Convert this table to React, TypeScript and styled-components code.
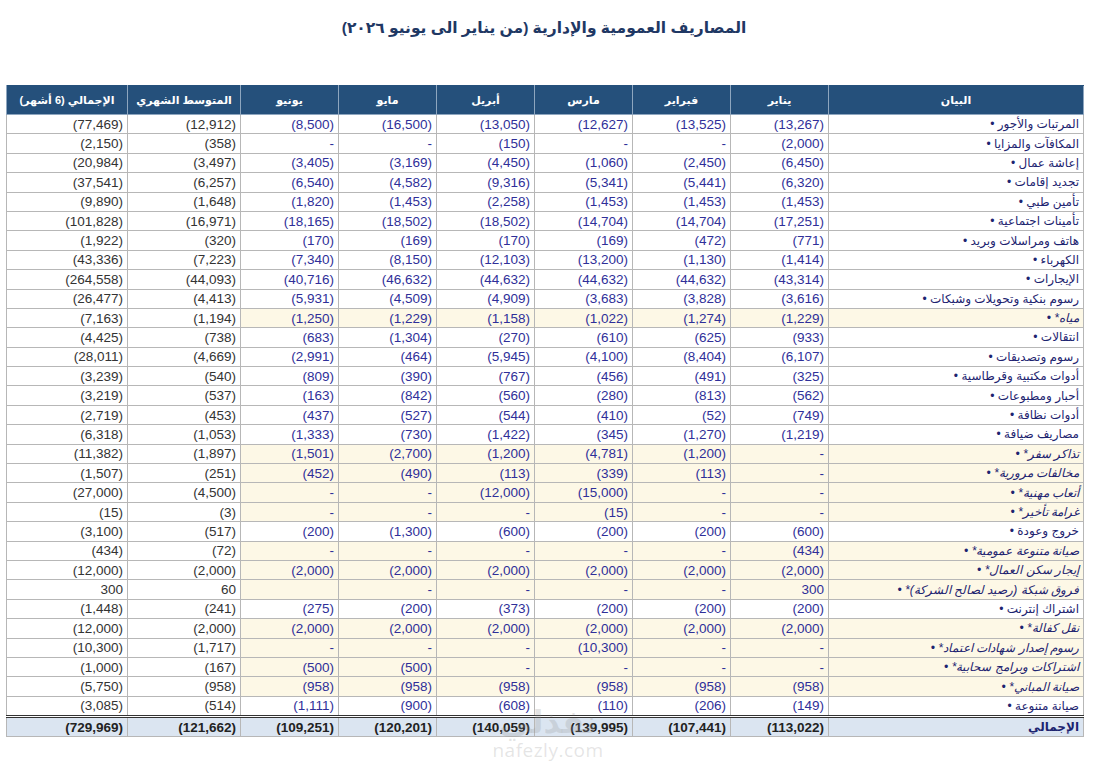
import styled, { createGlobalStyle } from "styled-components";

type Row = {
  label: string;
  months: (number | null)[];
  avg: number;
  total: number;
  manual?: boolean;
};

const months = ["يناير", "فبراير", "مارس", "أبريل", "مايو", "يونيو"];

const rows: Row[] = [
  { label: "المرتبات والأجور", months: [-13267, -13525, -12627, -13050, -16500, -8500], avg: -12912, total: -77469 },
  { label: "المكافآت والمزايا", months: [-2000, 0, 0, -150, 0, 0], avg: -358, total: -2150 },
  { label: "إعاشة عمال", months: [-6450, -2450, -1060, -4450, -3169, -3405], avg: -3497, total: -20984 },
  { label: "تجديد إقامات", months: [-6320, -5441, -5341, -9316, -4582, -6540], avg: -6257, total: -37541 },
  { label: "تأمين طبي", months: [-1453, -1453, -1453, -2258, -1453, -1820], avg: -1648, total: -9890 },
  { label: "تأمينات اجتماعية", months: [-17251, -14704, -14704, -18502, -18502, -18165], avg: -16971, total: -101828 },
  { label: "هاتف ومراسلات وبريد", months: [-771, -472, -169, -170, -169, -170], avg: -320, total: -1922 },
  { label: "الكهرباء", months: [-1414, -1130, -13200, -12103, -8150, -7340], avg: -7223, total: -43336 },
  { label: "الإيجارات", months: [-43314, -44632, -44632, -44632, -46632, -40716], avg: -44093, total: -264558 },
  { label: "رسوم بنكية وتحويلات وشبكات", months: [-3616, -3828, -3683, -4909, -4509, -5931], avg: -4413, total: -26477 },
  { label: "مياه*", manual: true, months: [-1229, -1274, -1022, -1158, -1229, -1250], avg: -1194, total: -7163 },
  { label: "انتقالات", months: [-933, -625, -610, -270, -1304, -683], avg: -738, total: -4425 },
  { label: "رسوم وتصديقات", months: [-6107, -8404, -4100, -5945, -464, -2991], avg: -4669, total: -28011 },
  { label: "أدوات مكتبية وقرطاسية", months: [-325, -491, -456, -767, -390, -809], avg: -540, total: -3239 },
  { label: "أحبار ومطبوعات", months: [-562, -813, -280, -560, -842, -163], avg: -537, total: -3219 },
  { label: "أدوات نظافة", months: [-749, -52, -410, -544, -527, -437], avg: -453, total: -2719 },
  { label: "مصاريف ضيافة", months: [-1219, -1270, -345, -1422, -730, -1333], avg: -1053, total: -6318 },
  { label: "تذاكر سفر*", manual: true, months: [0, -1200, -4781, -1200, -2700, -1501], avg: -1897, total: -11382 },
  { label: "مخالفات مرورية*", manual: true, months: [0, -113, -339, -113, -490, -452], avg: -251, total: -1507 },
  { label: "أتعاب مهنية*", manual: true, months: [0, 0, -15000, -12000, 0, 0], avg: -4500, total: -27000 },
  { label: "غرامة تأخير*", manual: true, months: [0, 0, -15, 0, 0, 0], avg: -3, total: -15 },
  { label: "خروج وعودة", months: [-600, -200, -200, -600, -1300, -200], avg: -517, total: -3100 },
  { label: "صيانة متنوعة عمومية*", manual: true, months: [-434, 0, 0, 0, 0, 0], avg: -72, total: -434 },
  { label: "إيجار سكن العمال*", manual: true, months: [-2000, -2000, -2000, -2000, -2000, -2000], avg: -2000, total: -12000 },
  { label: "فروق شبكة (رصيد لصالح الشركة)*", manual: true, months: [300, 0, 0, 0, 0, null], avg: 60, total: 300 },
  { label: "اشتراك إنترنت", months: [-200, -200, -200, -373, -200, -275], avg: -241, total: -1448 },
  { label: "نقل كفالة*", manual: true, months: [-2000, -2000, -2000, -2000, -2000, -2000], avg: -2000, total: -12000 },
  { label: "رسوم إصدار شهادات اعتماد*", manual: true, months: [0, 0, -10300, 0, 0, 0], avg: -1717, total: -10300 },
  { label: "اشتراكات وبرامج سحابية*", manual: true, months: [0, 0, 0, 0, -500, -500], avg: -167, total: -1000 },
  { label: "صيانة المباني*", manual: true, months: [-958, -958, -958, -958, -958, -958], avg: -958, total: -5750 },
  { label: "صيانة متنوعة", months: [-149, -206, -110, -608, -900, -1111], avg: -514, total: -3085 },
];

const totals = {
  months: [-113022, -107441, -139995, -140059, -120201, -109251],
  avg: -121662,
  total: -729969,
};

const fmt = (n: number | null) => {
  if (n === null) return "";
  if (n === 0) return "-";
  const s = Math.abs(n).toLocaleString("en-US");
  return n < 0 ? `(${s})` : s;
};

const GlobalStyle = createGlobalStyle`
  html, body {
    margin: 0;
    background: #ffffff;
  }
  body {
    font-family: "Liberation Sans", "DejaVu Sans", Arial, sans-serif;
  }
`;

const Page = styled.div`
  position: relative;
  width: 1098px;
  height: 762px;
  padding: 0 16px 0 6px;
  box-sizing: border-box;
  overflow: hidden;
`;

const Title = styled.h1`
  margin: 0;
  padding-top: 19px;
  height: 85px;
  box-sizing: border-box;
  text-align: center;
  font-size: 15.5px;
  font-weight: 700;
  color: #1f3864;
  direction: rtl;
`;

const Sheet = styled.table`
  width: 1076px;
  table-layout: fixed;
  border-collapse: collapse;
  direction: rtl;
`;

const HeadCell = styled.th`
  height: 28px;
  padding: 0 4px;
  background: #25507b;
  color: #ffffff;
  font-size: 11px;
  font-weight: 700;
  text-align: center;
  border: 1px solid #8ea6bf;
  border-top-color: #25507b;
`;

const LabelCell = styled.td<{ $manual?: boolean }>`
  height: 18.4px;
  padding: 0 4px;
  text-align: right;
  font-size: 12px;
  color: #1d2470;
  font-style: ${(p) => (p.$manual ? "italic" : "normal")};
  background: ${(p) => (p.$manual ? "#fdf8e6" : "#ffffff")};
  border: 1px solid #b7b7b7;
  white-space: nowrap;
  overflow: hidden;
`;

const NumCell = styled.td<{ $manual?: boolean; $tone: "month" | "sum" }>`
  padding: 0 4px;
  direction: ltr;
  text-align: right;
  font-size: 13.5px;
  color: ${(p) => (p.$tone === "month" ? "#2f2f99" : "#333333")};
  background: ${(p) => (p.$manual ? "#fdf8e6" : "#ffffff")};
  border: 1px solid #b7b7b7;
  white-space: nowrap;
`;

const TotalLabel = styled.td`
  height: 18px;
  padding: 0 4px;
  text-align: right;
  font-size: 12px;
  font-weight: 700;
  color: #1d2470;
  background: #dbe5f1;
  border: 1px solid #b7b7b7;
  border-top: 3px double #333333;
`;

const TotalNum = styled.td`
  padding: 0 4px;
  direction: ltr;
  text-align: right;
  font-size: 13.5px;
  font-weight: 700;
  color: #222222;
  background: #dbe5f1;
  border: 1px solid #b7b7b7;
  border-top: 3px double #333333;
`;

const Watermark = styled.div`
  position: absolute;
  left: 468px;
  top: 704px;
  width: 160px;
  display: flex;
  flex-direction: column;
  align-items: center;
  pointer-events: none;
  color: rgba(150, 150, 150, 0.25);
`;

const WatermarkLogo = styled.span`
  font-family: "DejaVu Sans", sans-serif;
  font-size: 32px;
  font-weight: 700;
  line-height: 36px;
  direction: rtl;
`;

const WatermarkSite = styled.span`
  font-family: "Open Sans", sans-serif;
  font-size: 19px;
  line-height: 20px;
  letter-spacing: 0.5px;
`;

export default function App() {
  return (
    <>
      <GlobalStyle />
      <Page>
        <Title>المصاريف العمومية والإدارية (من يناير الى يونيو ٢٠٢٦)</Title>
        <Sheet>
          <colgroup>
            <col style={{ width: 255 }} />
            {months.map((m) => (
              <col key={m} style={{ width: 98 }} />
            ))}
            <col style={{ width: 113 }} />
            <col style={{ width: 121 }} />
          </colgroup>
          <thead>
            <tr>
              <HeadCell>البيان</HeadCell>
              {months.map((m) => (
                <HeadCell key={m}>{m}</HeadCell>
              ))}
              <HeadCell>المتوسط الشهري</HeadCell>
              <HeadCell>الإجمالي (6 أشهر)</HeadCell>
            </tr>
          </thead>
          <tbody>
            {rows.map((r) => (
              <tr key={r.label}>
                <LabelCell $manual={r.manual}>{r.label} •</LabelCell>
                {r.months.map((v, i) => (
                  <NumCell key={i} $manual={r.manual} $tone="month">
                    {fmt(v)}
                  </NumCell>
                ))}
                <NumCell $tone="sum">{fmt(r.avg)}</NumCell>
                <NumCell $tone="sum">{fmt(r.total)}</NumCell>
              </tr>
            ))}
            <tr>
              <TotalLabel>الإجمالي</TotalLabel>
              {totals.months.map((v, i) => (
                <TotalNum key={i}>{fmt(v)}</TotalNum>
              ))}
              <TotalNum>{fmt(totals.avg)}</TotalNum>
              <TotalNum>{fmt(totals.total)}</TotalNum>
            </tr>
          </tbody>
        </Sheet>
        <Watermark>
          <WatermarkLogo>نفذلي</WatermarkLogo>
          <WatermarkSite>nafezly.com</WatermarkSite>
        </Watermark>
      </Page>
    </>
  );
}
